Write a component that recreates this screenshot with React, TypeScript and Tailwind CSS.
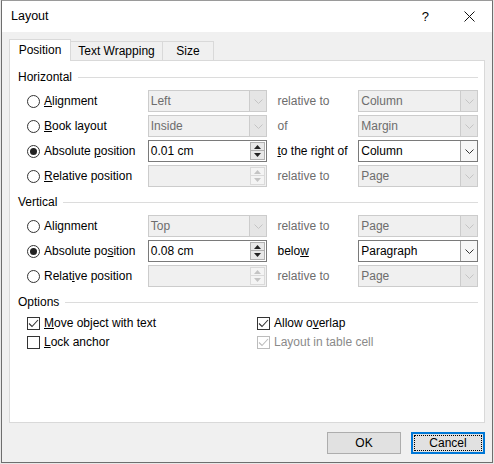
import React from 'react'

const Chevron = ({ dim }: { dim?: boolean }) => (
  <svg width="9" height="5" viewBox="0 0 9 5">
    <polyline points="0.5,0.5 4.5,4.5 8.5,0.5" fill="none" stroke={dim ? '#c4c4c4' : '#333'} strokeWidth="1" />
  </svg>
)

function Combo({ value, disabled }: { value: string, disabled?: boolean }) {
  if (disabled) {
    return (
      <div className="flex h-[22px] w-[120px] border border-[#cccccc] bg-[#f0f0f0]">
        <div className="flex-1 pl-[2px] leading-[20px] text-[#6d6d6d]">{value}</div>
        <div className="flex w-[17px] items-center justify-center bg-[#e5e5e5] border-l border-[#cccccc]">
          <Chevron dim />
        </div>
      </div>
    )
  }
  return (
    <div className="flex h-[22px] w-[120px] border border-[#7a7a7a] bg-white">
      <div className="flex-1 pl-[2px] leading-[20px] text-black">{value}</div>
      <div className="flex w-[17px] items-center justify-center border-l border-[#a0a0a0] bg-[#f7f7f7]">
        <Chevron />
      </div>
    </div>
  )
}

function Spinner({ value, disabled }: { value?: string, disabled?: boolean }) {
  const c = disabled ? '#c4c4c4' : '#222'
  return (
    <div className={`flex h-[22px] w-[120px] border ${disabled ? 'border-[#cccccc] bg-[#f0f0f0]' : 'border-[#7a7a7a] bg-white'}`}>
      <div className="flex-1 pl-[2px] leading-[20px] text-black">{value}</div>
      <div className="flex w-[17px] flex-col items-center justify-center py-[1px] pr-[1px]">
        <div className={`flex h-[9px] w-[15px] items-center justify-center border ${disabled ? 'border-[#dadada] bg-[#f4f4f4]' : 'border-[#b0b0b0] bg-[#e8e8e8]'}`}>
          <svg width="7" height="4" viewBox="0 0 7 4"><polygon points="0,4 3.5,0 7,4" fill={c} /></svg>
        </div>
        <div className={`flex h-[9px] w-[15px] items-center justify-center border border-t-0 ${disabled ? 'border-[#dadada] bg-[#f4f4f4]' : 'border-[#b0b0b0] bg-[#e8e8e8]'}`}>
          <svg width="7" height="4" viewBox="0 0 7 4"><polygon points="0,0 7,0 3.5,4" fill={c} /></svg>
        </div>
      </div>
    </div>
  )
}

function Radio({ checked }: { checked?: boolean }) {
  return (
    <div className="flex h-[13px] w-[13px] items-center justify-center rounded-full border border-[#333] bg-white">
      {checked && <div className="h-[7px] w-[7px] rounded-full bg-[#222]" />}
    </div>
  )
}

function Check({ checked, disabled }: { checked?: boolean, disabled?: boolean }) {
  const c = disabled ? '#bcbcbc' : '#333'
  return (
    <div className={`flex h-[13px] w-[13px] items-center justify-center border bg-white ${disabled ? 'border-[#bcbcbc]' : 'border-[#333]'}`}>
      {checked && (
        <svg width="11" height="11" viewBox="0 0 11 11">
          <polyline points="1,5.5 4,8.5 10,2" fill="none" stroke={c} strokeWidth="1.1" />
        </svg>
      )}
    </div>
  )
}

function Header({ text }: { text: string }) {
  return (
    <div className="flex h-[16px] items-center">
      <span className="leading-[16px]">{text}</span>
      <div className="ml-[6px] h-px flex-1 bg-[#dcdcdc]" />
    </div>
  )
}

function Row({ checked, label, control, rel, relDisabled, right }: { checked?: boolean, label: React.ReactNode, control: React.ReactNode, rel: React.ReactNode, relDisabled?: boolean, right: React.ReactNode }) {
  return (
    <div className="flex h-[22px] items-center">
      <div className="flex w-[121px] items-center gap-[4px]">
        <Radio checked={checked} />
        <span className="leading-[16px]">{label}</span>
      </div>
      {control}
      <div className={`w-[91px] pl-[10px] ${relDisabled ? 'text-[#6d6d6d]' : 'text-black'}`}>{rel}</div>
      {right}
    </div>
  )
}

export default function App() {
  return (
    <div className="h-[464px] w-[494px] bg-[#e8e8e8] font-['Liberation_Sans',Arial,sans-serif] text-[12px] text-black">
      <div className="ml-[1px] flex h-[463px] w-[492px] flex-col border border-t-[#9a9a9a] border-[#6e6e6e] bg-[#f0f0f0]">
        {/* title bar */}
        <div className="flex h-[31px] items-center bg-white pl-[9px]">
          <span className="flex-1 text-[12.5px]">Layout</span>
          <span className="mr-[35px] text-[13px]">?</span>
          <svg width="11" height="11" viewBox="0 0 11 11" className="mr-[17px]">
            <path d="M0.5 0.5L10.5 10.5M10.5 0.5L0.5 10.5" stroke="#111" strokeWidth="1" />
          </svg>
        </div>

        {/* tabs */}
        <div className="mt-[7px] flex h-[22px] items-end pl-[7px]">
          <div className="relative z-10 flex h-[22px] w-[62px] items-center justify-center border border-b-0 border-[#d9d9d9] bg-white pb-[1px]">Position</div>
          <div className="flex h-[20px] w-[92px] items-center justify-center border border-l-0 border-[#d9d9d9] bg-[#f0f0f0]">Text Wrapping</div>
          <div className="flex h-[20px] w-[51px] items-center justify-center border border-l-0 border-[#d9d9d9] bg-[#f0f0f0]">Size</div>
        </div>

        {/* panel */}
        <div className="ml-[7px] mt-[-1px] h-[363px] w-[476px] border border-[#d9d9d9] bg-white pl-[8px] pr-[6px] pt-[8px]">
          <Header text="Horizontal" />
          <div className="mt-[5px] flex flex-col gap-[3px] pl-[9px]">
            <Row label={<><u>A</u>lignment</>} control={<Combo value="Left" disabled />} rel="relative to" relDisabled right={<Combo value="Column" disabled />} />
            <Row label={<><u>B</u>ook layout</>} control={<Combo value="Inside" disabled />} rel="of" relDisabled right={<Combo value="Margin" disabled />} />
            <Row checked label={<>Absolute <u>p</u>osition</>} control={<Spinner value="0.01 cm" />} rel={<><u>t</u>o the right of</>} right={<Combo value="Column" />} />
            <Row label={<><u>R</u>elative position</>} control={<Spinner disabled />} rel="relative to" relDisabled right={<Combo value="Page" disabled />} />
          </div>

          <div className="mt-[7px]">
            <Header text="Vertical" />
          </div>
          <div className="mt-[5px] flex flex-col gap-[3px] pl-[9px]">
            <Row label={<>Ali<u>g</u>nment</>} control={<Combo value="Top" disabled />} rel="relative to" relDisabled right={<Combo value="Page" disabled />} />
            <Row checked label={<>Absolute po<u>s</u>ition</>} control={<Spinner value="0.08 cm" />} rel={<>belo<u>w</u></>} right={<Combo value="Paragraph" />} />
            <Row label={<>Relat<u>i</u>ve position</>} control={<Spinner disabled />} rel="relative to" relDisabled right={<Combo value="Page" disabled />} />
          </div>

          <div className="mt-[7px]">
            <Header text="Options" />
          </div>
          <div className="mt-[5px] flex flex-col gap-[3px] pl-[9px]">
            <div className="flex h-[16px] items-center">
              <div className="flex w-[230px] items-center gap-[4px]">
                <Check checked />
                <span><u>M</u>ove object with text</span>
              </div>
              <div className="flex items-center gap-[4px]">
                <Check checked />
                <span>Allow o<u>v</u>erlap</span>
              </div>
            </div>
            <div className="flex h-[16px] items-center">
              <div className="flex w-[230px] items-center gap-[4px]">
                <Check />
                <span><u>L</u>ock anchor</span>
              </div>
              <div className="flex items-center gap-[4px] text-[#8a8a8a]">
                <Check checked disabled />
                <span>Layout in table cell</span>
              </div>
            </div>
          </div>
        </div>

        {/* buttons */}
        <div className="mt-[9px] flex justify-end gap-[10px] pr-[7px]">
          <button className="h-[22px] w-[74px] border border-[#adadad] bg-[#e1e1e1]">OK</button>
          <button className="flex h-[22px] w-[74px] items-center justify-center border-2 border-[#0078d7] bg-[#e1e1e1] p-[1px]">
            <span className="flex h-full w-full items-center justify-center border border-dotted border-black">Cancel</span>
          </button>
        </div>
      </div>
    </div>
  )
}
